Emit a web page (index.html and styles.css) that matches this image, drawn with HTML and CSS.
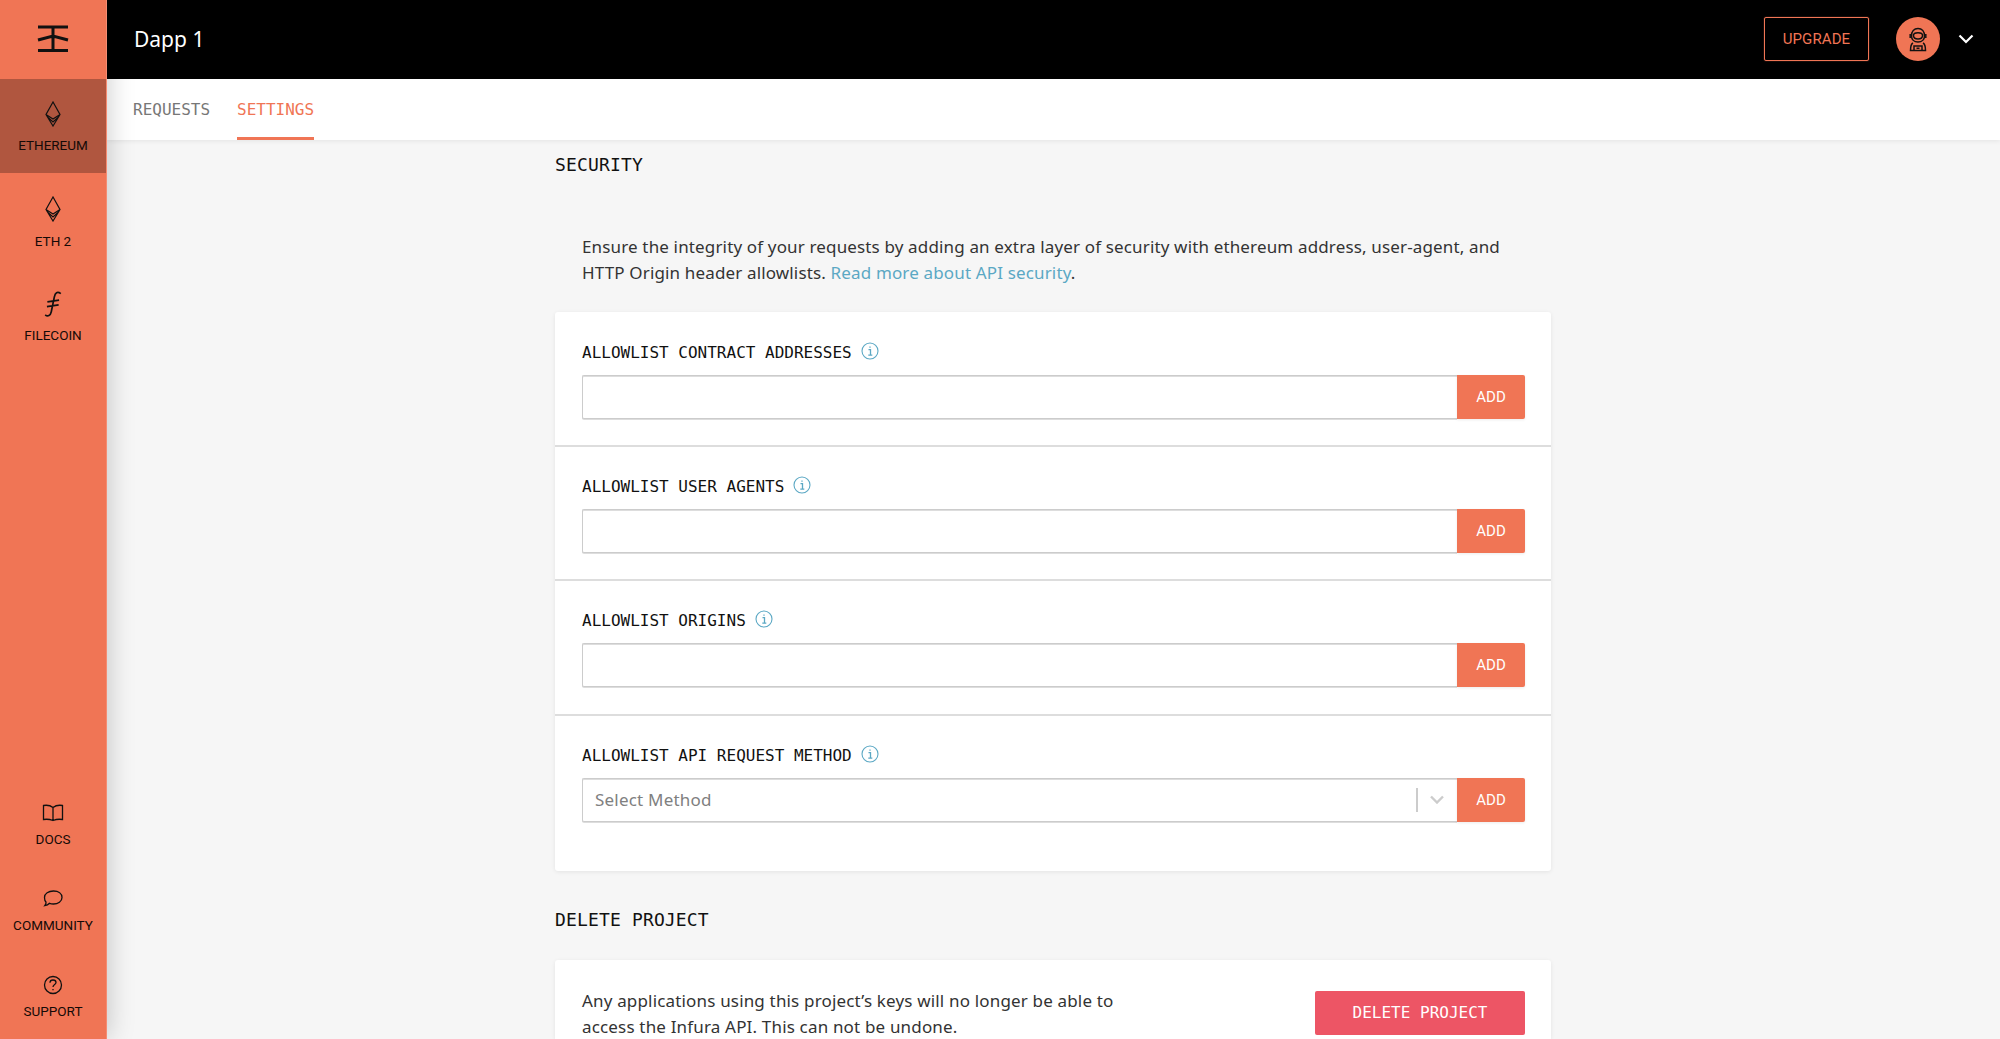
FILE: index.html
```html
<!DOCTYPE html>
<html lang="en">
<head>
<meta charset="utf-8">
<title>Dapp 1</title>
<link rel="stylesheet" href="styles.css">
</head>
<body>
<aside class="sidebar">
  <div class="logo">
    <svg width="32" height="28" viewBox="0 0 32 28"><path d="M1 2H31M1 25.500H31M16 2V25.500M1 15L16 11L31 15" class="logo-stroke"/></svg>
  </div>
  <nav class="nets">
    <a class="net active">
      <svg class="eth" width="18" height="26" viewBox="0 0 18 26"><path d="M9 1L2 13.500L9 25L16 13.500ZM2 13.500L9 18L16 13.500M3.500 16L9 21L14.500 16"/></svg>
      <span>ETHEREUM</span>
    </a>
    <a class="net">
      <svg class="eth" width="18" height="26" viewBox="0 0 18 26"><path d="M9 1L2 13.500L9 25L16 13.500ZM2 13.500L9 18L16 13.500M3.500 16L9 21L14.500 16"/></svg>
      <span>ETH 2</span>
    </a>
    <a class="net">
      <svg class="fil" width="20" height="26" viewBox="0 0 22 30"><path d="M20 3C16 0 13.500 2 12.500 7L9 24C8 28.500 5 30 2 27.500M4.500 12.500L18 10.500M4 18L17.500 16"/></svg>
      <span>FILECOIN</span>
    </a>
  </nav>
  <nav class="help">
    <a class="help-item">
      <svg class="ic" width="22" height="20" viewBox="0 0 22 20"><path d="M11 4.500C8.500 2.500 4.500 2 1.500 2.500V16.500C4.500 16 8.500 16.500 11 17.500C13.500 16.500 17.500 16 20.500 16.500V2.500C17.500 2 13.500 2.500 11 4.500ZM11 4.500V17.500"/></svg>
      <span>DOCS</span>
    </a>
    <a class="help-item">
      <svg class="ic" width="20" height="20" viewBox="0 0 20 20"><path d="M10.500 2C15.500 2 19 4.500 19 8.500C19 12.500 15 15 10.500 15C9 15 7.800 14.800 6.500 14.300C5 16 3.500 16.500 1.800 16.700C2.800 15.500 3.200 14.300 3 13C1.800 12 1.500 10 1.500 8.500C1.500 4.500 5.500 2 10.500 2Z"/></svg>
      <span>COMMUNITY</span>
    </a>
    <a class="help-item">
      <svg class="ic" width="20" height="20" viewBox="0 0 20 20"><circle cx="10" cy="10" r="8.500"/><path d="M7 7.800C7 5.800 8.500 5 10 5C11.700 5 13 6 13 7.500C13 9.500 10 9.500 10 12"/><path d="M10 14V15.200"/></svg>
      <span>SUPPORT</span>
    </a>
  </nav>
</aside>

<div class="main">
  <header class="topbar">
    <div class="project">Dapp 1</div>
    <div class="account">
      <a class="upgrade">UPGRADE</a>
      <div class="avatar">
        <svg width="26" height="26" viewBox="0 0 26 26"><path d="M6.500 10C6.500 5.500 9 2.500 13 2.500C17 2.500 19.500 5.500 19.500 10C19.500 13.500 17 16 13 16C9 16 6.500 13.500 6.500 10Z"/><path d="M8.500 9.500C8.500 7.500 10 6.800 13 6.800C16 6.800 17.500 7.500 17.500 9.500C17.500 12 15.500 13 13 13C10.500 13 8.500 12 8.500 9.500Z"/><path d="M5.200 8V12M20.800 8V12M8 17C6 18 5.500 20 5.500 24.500H20.500C20.500 20 20 18 18 17M9 24.500V20H17V24.500M11.500 22.200H14.500"/></svg>
      </div>
      <svg class="caret" width="16" height="10" viewBox="0 0 16 10"><path d="M1.500 1.500L8 8L14.500 1.500"/></svg>
    </div>
  </header>

  <div class="tabs">
    <a class="tab">REQUESTS</a>
    <a class="tab current">SETTINGS</a>
  </div>

  <main class="content">
    <h2 class="section-title">SECURITY</h2>
    <p class="intro">Ensure the integrity of your requests by adding an extra layer of security with ethereum address, user-agent, and HTTP Origin header allowlists. <a class="link">Read more about API security</a>.</p>

    <section class="card">
      <div class="row">
        <div class="label"><span>ALLOWLIST CONTRACT ADDRESSES</span><svg class="info" width="18" height="18" viewBox="0 0 18 18"><use href="#info"/></svg></div>
        <div class="field"><div class="input"></div><button class="add">ADD</button></div>
      </div>
      <div class="row">
        <div class="label"><span>ALLOWLIST USER AGENTS</span><svg class="info" width="18" height="18" viewBox="0 0 18 18"><use href="#info"/></svg></div>
        <div class="field"><div class="input"></div><button class="add">ADD</button></div>
      </div>
      <div class="row">
        <div class="label"><span>ALLOWLIST ORIGINS</span><svg class="info" width="18" height="18" viewBox="0 0 18 18"><use href="#info"/></svg></div>
        <div class="field"><div class="input"></div><button class="add">ADD</button></div>
      </div>
      <div class="row last">
        <div class="label"><span>ALLOWLIST API REQUEST METHOD</span><svg class="info" width="18" height="18" viewBox="0 0 18 18"><use href="#info"/></svg></div>
        <div class="field">
          <div class="input select">
            <span class="placeholder">Select Method</span>
            <i class="sep"></i>
            <svg class="select-caret" width="14" height="9" viewBox="0 0 14 9"><path d="M1 1.500L7 7.500L13 1.500"/></svg>
          </div>
          <button class="add">ADD</button>
        </div>
      </div>
    </section>

    <h2 class="section-title delete-title">DELETE PROJECT</h2>
    <section class="card delete-card">
      <p class="delete-text">Any applications using this project’s keys will no longer be able to access the Infura API. This can not be undone.</p>
      <button class="delete">DELETE PROJECT</button>
    </section>
  </main>
</div>

<svg class="defs" width="0" height="0">
  <symbol id="info" viewBox="0 0 18 18">
    <circle cx="9" cy="9" r="8" fill="none" stroke="#5ba8c4" stroke-width="1.100"/>
    <path d="M7.500 7.700H9.500V13M7.300 13.200H11.300M9 4.400V5.800" fill="none" stroke="#5ba8c4" stroke-width="1.300"/>
  </symbol>
</svg>
</body>
</html>
```

FILE: styles.css
```css
* { box-sizing: border-box; }
html, body { height: 100%; }
body {
  margin: 0;
  display: flex;
  height: 1039px;
  overflow: hidden;
  background: #f6f6f6;
  color: #333;
  font-family: "Noto Sans", "Open Sans", sans-serif;
}
.sidebar {
  width: 107px;
  flex: none;
  display: flex;
  flex-direction: column;
  background: #f07555;
  color: #150a07;
  box-shadow: 0 0 26px rgba(0, 0, 0, .22);
  position: relative;
  z-index: 2;
  border-right: 1px solid #f58c72;
  font-family: Roboto, sans-serif;
  font-size: 13.500px;
}
.logo { height: 79px; padding-bottom: 2px; display: flex; align-items: center; justify-content: center; }
.logo-stroke { fill: none; stroke: #111; stroke-width: 3; }
.nets { display: flex; flex-direction: column; }
.net {
  height: 95px;
  padding-top: 23px;
  display: flex;
  flex-direction: column;
  align-items: center;
  gap: 11px;
}
.net.active { height: 94px; padding-top: 22px; gap: 10px; background: #b0563f; }
.net:last-child { gap: 10px; }
.eth path { fill: none; stroke: #111; stroke-width: 1.200; }
.fil path { fill: none; stroke: #111; stroke-width: 2; }
.help { margin-top: auto; display: flex; flex-direction: column; }
.help-item {
  height: 86px;
  padding-top: 22px;
  display: flex;
  flex-direction: column;
  align-items: center;
  gap: 8px;
}
.ic { fill: none; stroke: #111; stroke-width: 1.300; }
.main { flex: 1; min-width: 0; display: flex; flex-direction: column; }
.topbar {
  height: 79px;
  flex: none;
  background: #000;
  color: #fff;
  display: flex;
  align-items: center;
  justify-content: space-between;
  padding: 0 26px 1px 27px;
  font-size: 21px;
}
.account { display: flex; align-items: center; }
.upgrade {
  width: 105px;
  height: 44px;
  display: flex;
  align-items: center;
  justify-content: center;
  border: 1px solid #f07555;
  border-radius: 2px;
  box-shadow: 0 0 1px #f07555;
  color: #f07555;
  font-family: Roboto, sans-serif;
  font-size: 15px;
  letter-spacing: .1px;
}
.avatar {
  width: 44px;
  height: 44px;
  margin-left: 27px;
  border-radius: 50%;
  background: #f07555;
  display: flex;
  align-items: center;
  justify-content: center;
}
.avatar svg { fill: none; stroke: #111; stroke-width: 1.500; }
.caret { margin-left: 18px; fill: none; stroke: #fff; stroke-width: 2.200; }
.tabs {
  height: 61px;
  flex: none;
  background: #fff;
  display: flex;
  gap: 27px;
  padding-left: 26px;
  box-shadow: 0 1px 5px rgba(0, 0, 0, .08);
  font-family: "DejaVu Sans Mono", monospace;
  font-size: 16px;
  position: relative;
  z-index: 1;
}
.tab {
  display: flex;
  align-items: center;
  padding-top: 3px;
  color: #777;
  border-bottom: 3px solid transparent;
}
.tab.current { color: #f07555; border-bottom-color: #f07555; }
.content { width: 996px; margin-left: 448px; flex: none; }
.section-title {
  margin: 0;
  font-family: "DejaVu Sans Mono", monospace;
  font-weight: 400;
  font-size: 18px;
  letter-spacing: .15px;
  line-height: 20px;
  color: #111;
}
.content > .section-title:first-child { padding-top: 15px; height: 35px; }
.intro {
  margin: 0;
  padding: 59px 27px 0;
  font-size: 17px;
  letter-spacing: .15px;
  line-height: 26px;
  color: #333;
}
.link { color: #5ba8c4; }
.card {
  background: #fff;
  border-radius: 3px;
  box-shadow: 0 1px 4px rgba(0, 0, 0, .08);
}
.content > .intro + .card { margin-top: 26px; }
.row {
  height: 134.400px;
  padding: 30px 26px 0 27px;
  border-top: 2px solid #ddd;
}
.row:first-child { height: 133px; padding-top: 31px; border-top: 0; }
.row.last { height: 157.200px; }
.label {
  height: 32px;
  display: flex;
  align-items: flex-start;
  gap: 9px;
  font-family: "DejaVu Sans Mono", monospace;
  font-size: 16px;
  line-height: 20px;
  color: #111;
}
.info { display: block; margin-top: -1px; }
.field { display: flex; height: 44px; }
.input {
  flex: 1;
  background: #fff;
  border: 1px solid #ccc;
  border-right: 0;
  border-radius: 2px 0 0 2px;
  box-shadow: inset 0 1px 0 #ddd, 0 1px 0 #ddd;
}
.add {
  width: 68px;
  border: 0;
  border-radius: 0 2px 2px 0;
  background: #f07555;
  color: #fff;
  font-family: Roboto, sans-serif;
  font-size: 15px;
  box-shadow: 0 1px 3px rgba(0, 0, 0, .08);
}
.select { display: flex; align-items: center; padding-left: 12px; }
.placeholder { flex: 1; color: #808080; font-size: 17px; letter-spacing: .2px; }
.sep { width: 2px; height: 24px; background: #ccc; }
.select-caret { margin: 0 13px 0 12px; fill: none; stroke: #ccc; stroke-width: 2.400; }
.delete-title { margin-top: 39px; }
.delete-card {
  margin-top: 30px;
  height: 79px;
  border-radius: 3px 3px 0 0;
  padding: 28px 26px 0 27px;
  display: flex;
  justify-content: space-between;
  align-items: flex-start;
}
.delete-text { margin: 0; width: 575px; font-size: 17px; letter-spacing: .17px; line-height: 26px; color: #333; }
.delete {
  width: 210px;
  height: 44px;
  margin-top: 3px;
  border: 0;
  border-radius: 2px;
  background: #ed5565;
  color: #fff;
  font-family: "DejaVu Sans Mono", monospace;
  font-size: 16px;
}
.defs { position: absolute; }
```
